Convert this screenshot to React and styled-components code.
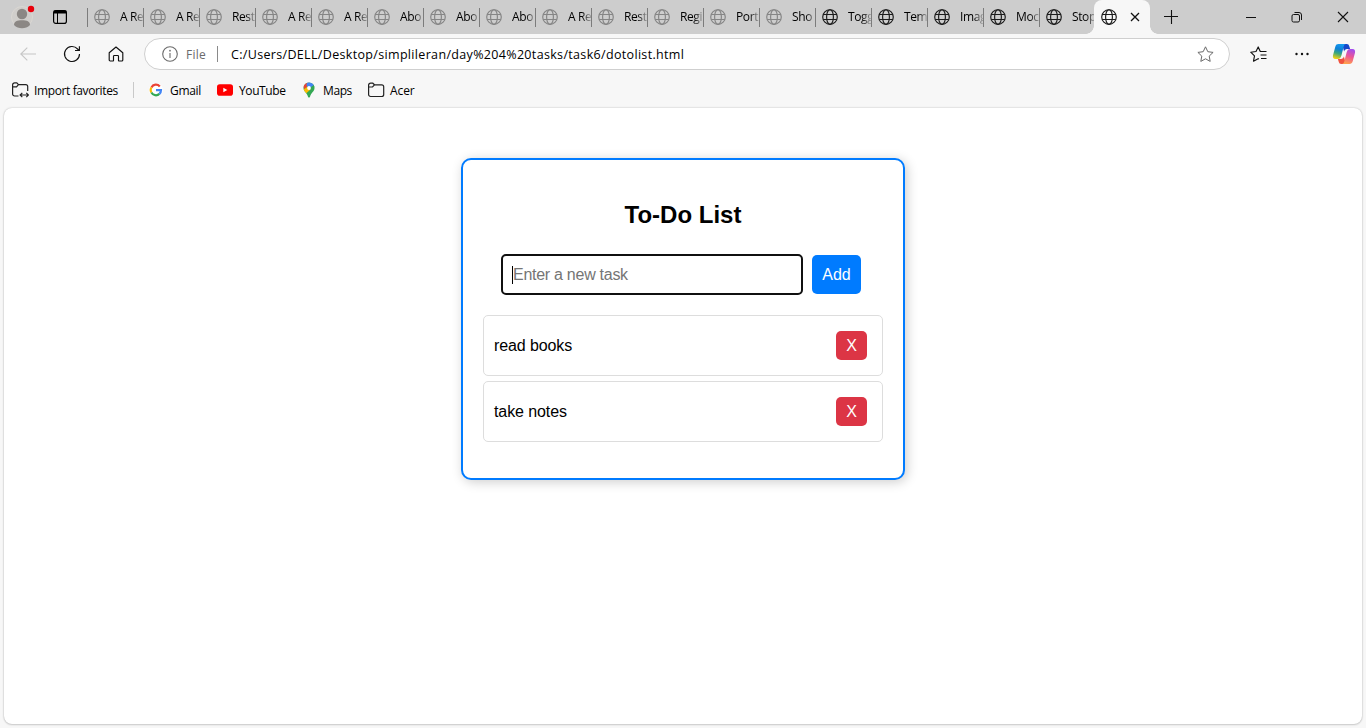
import React from "react";
import styled, { createGlobalStyle } from "styled-components";

const Global = createGlobalStyle`
  * { box-sizing: border-box; }
  body { margin: 0; background: #f7f7f7; font-family: "Open Sans", "Noto Sans", sans-serif; overflow: hidden; }
  svg { display: block; flex: none; }
`;
const Browser = styled.div`
  width: 1366px; height: 728px; background: #f7f7f7;
  display: flex; flex-direction: column; overflow: hidden;
`;
const TabStrip = styled.div`
  height: 34px; background: #cdcdcd; display: flex; flex: none;
`;
const Profile = styled.div`
  width: 44px; padding: 5px 0 0 10px;
`;
const TabActions = styled.div`
  width: 43px; padding: 9px 0 0 8px;
`;
const Tab = styled.div`
  width: 56px; display: flex; align-items: center; padding-left: 7px; position: relative;
  color: ${(p) => (p.$loaded ? "#1b1b1b" : "#858585")};
  &::before { content: ""; position: absolute; left: 0; top: 8px; width: 1px; height: 19px; background: #7c7c7c; }
`;
const TabTitle = styled.span`
  margin-left: 10px; width: 23px; overflow: hidden; white-space: nowrap;
  font-size: 12px; line-height: 18px; color: #000; letter-spacing: -0.4px;
  mask-image: linear-gradient(90deg, #000 60%, rgba(0,0,0,.2));
`;
const ActiveTab = styled.div`
  width: 56px; margin-left: -1px; background: #f7f7f7; border-radius: 8px 8px 0 0; position: relative;
  display: flex; align-items: center; padding-left: 7px; gap: 13px; color: #1b1b1b;
  &::before, &::after {
    content: ""; position: absolute; bottom: 0; width: 8px; height: 8px;
  }
  &::before { left: -8px; background: radial-gradient(circle at 0 0, transparent 7.5px, #f7f7f7 8px); }
  &::after { right: -8px; background: radial-gradient(circle at 100% 0, transparent 7.5px, #f7f7f7 8px); }
`;
const NewTab = styled.div`
  padding: 9px 0 0 14px; flex: 1;
`;
const WindowButton = styled.div`
  width: 46px; display: flex; align-items: center; justify-content: center;
`;
const Toolbar = styled.div`
  height: 40px; display: flex; align-items: center; flex: none;
`;
const ToolIcon = styled.div`
  width: ${(p) => p.$width || 44}px; margin-left: ${(p) => p.$offset || 0}px;
  display: flex; justify-content: center; flex: none;
`;
const AddressBar = styled.div`
  width: 1086px; height: 32px; margin-left: 6px; border: 1px solid #cfcfcf; border-radius: 16px;
  background: #fff; display: flex; align-items: center; padding: 0 15px 0 17px;
`;
const Scheme = styled.span`
  margin-left: 8px; width: 31px; font-size: 12px; color: #6b6b6b; white-space: nowrap; letter-spacing: 0.25px;
`;
const AddressRule = styled.span`
  width: 1px; height: 16px; background: #8a8a8a; margin-right: 13px;
`;
const Url = styled.span`
  flex: 1; font-size: 12.5px; color: #000; white-space: nowrap; letter-spacing: 0.33px;
`;
const Favorites = styled.div`
  height: 34px; display: flex; align-items: center; padding: 0 0 2px 12px; flex: none;
`;
const Favorite = styled.div`
  display: flex; align-items: center; gap: ${(p) => p.$gap}px; width: ${(p) => p.$width}px;
  font-size: 12px; color: #000; white-space: nowrap; letter-spacing: ${(p) => p.$ls || 0}px;
`;
const FavoriteRule = styled.span`
  width: 1px; height: 16px; background: #c9c9c9; margin-right: 15px;
`;
const Page = styled.main`
  width: 1358px; height: 616px; margin-left: 4px; background: #fff; border-radius: 8px;
  box-shadow: 0 0 2px rgba(0,0,0,.25), 0 1px 2px rgba(0,0,0,.12);
  font-family: "Liberation Sans", Arial, sans-serif; display: flex; justify-content: center; align-items: flex-start;
  padding-top: 50px;
`;
const Card = styled.section`
  width: 444px; height: 322px; border: 2px solid #007bff; border-radius: 10px; padding: 20px;
  box-shadow: 2px 2px 12px rgba(0,0,0,.2); background: #fff;
`;
const Title = styled.h2`
  margin: 21px 0 25px; font-size: 24px; line-height: 28px; text-align: center; color: #000;
`;
const Form = styled.div`
  display: flex; align-items: center; padding-left: 18px; height: 41px;
`;
const Field = styled.div`
  width: 302px; height: 41px; border: 2px solid #101010; border-radius: 5px; padding-left: 9px;
  display: flex; align-items: center; font-size: 16px; color: #757575; letter-spacing: -0.27px;
`;
const Caret = styled.span`
  width: 1px; height: 18px; background: #000;
`;
const AddButton = styled.button`
  width: 49px; height: 39px; margin-left: 9px; border: 0; border-radius: 5px; padding: 0;
  background: #007bff; color: #fff; font: 16px "Liberation Sans", Arial, sans-serif;
`;
const Tasks = styled.ul`
  list-style: none; margin: 20px 0 0; padding: 0; display: flex; flex-direction: column; gap: 5px;
`;
const Task = styled.li`
  height: 61px; border: 1px solid #ddd; border-radius: 5px; padding: 0 15px 0 10px;
  display: flex; align-items: center; justify-content: space-between; font-size: 16px; color: #000; letter-spacing: -0.1px;
`;
const DeleteButton = styled.button`
  width: 31px; height: 29px; border: 0; border-radius: 5px; padding: 0;
  background: #dc3545; color: #fff; font: 16px "Liberation Sans", Arial, sans-serif;
`;

const Globe = () => (
  <svg width="16" height="16" viewBox="0 0 16 16" fill="none" stroke="currentColor" strokeWidth="1.15">
    <circle cx="8" cy="8" r="7.3" />
    <ellipse cx="8" cy="8" rx="3.4" ry="7.3" />
    <path d="M1.2 5.5h13.6M1.2 10.5h13.6" />
  </svg>
);
const Folder = ({ sync }) => (
  <svg width="17" height="16" viewBox="0 0 17 16" fill="none" stroke="#222" strokeWidth="1.2">
    {sync ? (
      <>
        <path d="M6.500 14H2.600A2 2 0 0 1 .6 12V2.900A2 2 0 0 1 2.600.900H4.800l1.700 1.700h7.200a2 2 0 0 1 2 2V9M.6 4.900H4.500l2-2.200" />
        <path d="M8.300 13h8M10.300 10.800L8.100 13l2.200 2.200M14.300 10.800l2.200 2.200-2.200 2.200" />
      </>
    ) : (
      <path d="M.6 4V12.500a2 2 0 0 0 2 2h11.100a2 2 0 0 0 2-2V4.800a2 2 0 0 0-2-2H6.500L4.800 1.200H2.600A2 2 0 0 0 .6 3.200V5H4.500l2-2.200" />
    )}
  </svg>
);
const Avatar = () => (
  <svg width="26" height="24" viewBox="0 0 26 24">
    <circle cx="12" cy="12" r="10.5" fill="#d0cecb" stroke="#dad7d3" />
    <circle cx="12" cy="9" r="5.2" fill="#8b8784" />
    <path d="M4 20c0-3.500 3-4.700 8-4.700s8 1.200 8 4.700c-2 2.200-5 3.200-8 3.200S6 22.200 4 20z" fill="#8b8784" />
    <circle cx="21" cy="4" r="3.2" fill="#e8000b" />
  </svg>
);
const Workspace = () => (
  <svg width="16" height="16" viewBox="0 0 16 16" fill="none" stroke="#000" strokeWidth="1.2">
    <rect x="1.600" y="1.600" width="12.800" height="12.800" rx="2.200" />
    <path d="M1.700 3h12.600" strokeWidth="3" />
    <path d="M5.500 4v10" strokeWidth="1" />
  </svg>
);
const Back = () => (
  <svg width="16" height="14" viewBox="0 0 16 14" fill="none" stroke="#c6c6c6" strokeWidth="1.1">
    <path d="M16 7H.8M7.300.6L.8 7l6.500 6.400" />
  </svg>
);
const Reload = () => (
  <svg width="18" height="18" viewBox="0 0 18 18" fill="none" stroke="#111" strokeWidth="1.15">
    <path d="M16.500 9A7.500 7.500 0 1 1 14.600 4L16 5.500M16.400 1.200V5.500h-4.400" />
  </svg>
);
const Home = () => (
  <svg width="16" height="16" viewBox="0 0 16 16" fill="none" stroke="#111" strokeWidth="1.15" strokeLinejoin="round">
    <path d="M1.200 6.800 8 1l6.800 5.800V14a1 1 0 0 1-1 1H11.100a.6.6 0 0 1-.6-.6V10.300a.8.8 0 0 0-.8-.8H6.300a.8.8 0 0 0-.8.8v4.100a.6.6 0 0 1-.6.6H2.200a1 1 0 0 1-1-1z" />
  </svg>
);
const Info = () => (
  <svg width="16" height="16" viewBox="0 0 16 16" fill="none" stroke="#6b6b6b" strokeWidth="1.100">
    <circle cx="8" cy="8" r="7.300" />
    <path d="M8 7v5" strokeWidth="1.100" />
    <circle cx="8" cy="4.700" r=".85" fill="#6b6b6b" stroke="none" />
  </svg>
);
const Star = () => (
  <svg width="17" height="16" viewBox="0 0 17 16" fill="none" stroke="#6a6a6a" strokeWidth="1" strokeLinejoin="round">
    <path d="M8.500.8l2.300 4.900 5.300.7-3.900 3.700 1 5.300-4.700-2.600-4.700 2.600 1-5.300L.9 6.400l5.300-.7z" />
  </svg>
);
const Collections = () => (
  <svg width="17" height="16" viewBox="0 0 17 16" fill="none" stroke="#111" strokeWidth="1.150" strokeLinejoin="round">
    <path d="M12 5.500H10.300L8.200.9 6 5.500.7 6.200l3.800 3.700-1 5.300 4.600-2.500.8.400" />
    <path d="M11 5.500h5.500M10.500 9h6M11 12.500h5.500" />
  </svg>
);
const More = () => (
  <svg width="14" height="4" viewBox="0 0 14 4" fill="#111">
    <circle cx="1.500" cy="2" r="1.200" /><circle cx="7" cy="2" r="1.200" /><circle cx="12.500" cy="2" r="1.200" />
  </svg>
);
const Copilot = () => (
  <svg width="24" height="22" viewBox="0 0 24 22">
    <defs>
      <linearGradient id="cool" x1=".6" y1="0" x2=".35" y2="1">
        <stop offset="0" stopColor="#159bf0" /><stop offset=".35" stopColor="#0c80d8" />
        <stop offset=".65" stopColor="#3ca77a" /><stop offset="1" stopColor="#f3d012" />
      </linearGradient>
      <linearGradient id="warm" x1=".7" y1="0" x2=".4" y2="1">
        <stop offset="0" stopColor="#a24df0" /><stop offset=".5" stopColor="#ee5792" />
        <stop offset="1" stopColor="#ffa24b" />
      </linearGradient>
    </defs>
    <path d="M10 1h4.800c1.500 0 2 .8 2.400 2l.9 3h-3c-1.700 0-2.500.9-3 2.500z" fill="#1647c9" />
    <path d="M14 21H9.200c-1.500 0-2-.8-2.400-2l-.9-3h3c1.700 0 2.500-.9 3-2.500z" fill="#f0523f" />
    <path d="M6.500 1H14c-1.200 0-1.800.9-2.200 2.200L9.400 12.500c-.7 2.500-1.600 3.500-3.600 3.500H3.500C1.300 16 .6 14.500 1 12.300L3.300 3.700C3.900 1.700 4.800 1 6.500 1z" fill="url(#cool)" />
    <path d="M17.500 21H10c1.200 0 1.800-.9 2.200-2.200l2.400-9.300C15.300 7 16.200 6 18.200 6h2.300c2.200 0 2.900 1.500 2.500 3.700l-2.300 8.600c-.6 2-1.500 2.700-3.200 2.700z" fill="url(#warm)" />
  </svg>
);
const Google = () => (
  <svg width="14" height="14" viewBox="0 0 14 14">
    <circle cx="7" cy="7" r="7" fill="#fff" />
    <g fill="none" strokeWidth="2.200">
      <path d="M2.400 4.500A5.100 5.100 0 0 1 10.800 3.400" stroke="#ea4335" />
      <path d="M2.400 4.500a5.100 5.100 0 0 0 0 5" stroke="#fbbc05" />
      <path d="M2.400 9.500a5.100 5.100 0 0 0 8 1.400" stroke="#34a853" />
      <path d="M10.400 10.900A5.100 5.100 0 0 0 12 7.100H7" stroke="#4285f4" />
    </g>
  </svg>
);
const YouTube = () => (
  <svg width="16" height="12" viewBox="0 0 16 12">
    <rect y=".3" width="16" height="11.400" rx="2.800" fill="#f00" />
    <path d="M6.300 3.700v4.600l4-2.300z" fill="#fff" />
  </svg>
);
const MapPin = () => (
  <svg width="12" height="16" viewBox="0 0 12 16">
    <clipPath id="pin"><path d="M6 .5A5.500 5.500 0 0 0 .5 6c0 3.500 3.300 4.600 4.500 8.700.4 1.200 1.600 1.200 2 0C8.200 10.600 11.500 9.500 11.500 6A5.500 5.500 0 0 0 6 .5z" /></clipPath>
    <g clipPath="url(#pin)">
      <path d="M0 0h12v16H0z" fill="#34a853" />
      <path d="M0 0h5L4 5 1.500 7 0 5z" fill="#ea4335" />
      <path d="M4 0h8v4L6 6 3.500 3.500z" fill="#4285f4" />
      <path d="M8 5l4-3v3L3.500 11 2 9z" fill="#34a853" />
      <path d="M0 8 4 5l3.500 2.500-4.500 4z" fill="#fbbc04" />
    </g>
    <circle cx="6" cy="6" r="1.900" fill="#fff" />
  </svg>
);
const Glyph = ({ d, size = 12, width = 1.1 }) => (
  <svg width={size} height={size} viewBox={`0 0 ${size} ${size}`} fill="none" stroke="#111" strokeWidth={width}>
    <path d={d} />
  </svg>
);

const tabs = ["A Re", "A Re", "Rest", "A Re", "A Re", "Abo", "Abo", "Abo", "A Re", "Rest", "Regi", "Port", "Sho", "Togg", "Tem", "Imag", "Moc", "Stop"];
const tasks = ["read books", "take notes"];

export default function App() {
  return (
    <Browser>
      <Global />
      <TabStrip>
        <Profile><Avatar /></Profile>
        <TabActions><Workspace /></TabActions>
        {tabs.map((t, i) => (
          <Tab key={i} $loaded={i > 12}>
            <Globe />
            <TabTitle>{t}</TabTitle>
          </Tab>
        ))}
        <ActiveTab>
          <Globe />
          <Glyph size={10} d="M1 1l8 8M9 1L1 9" width={1.3} />
        </ActiveTab>
        <NewTab><Glyph size={16} d="M0 7.500h14M7.500 1v14" /></NewTab>
        <WindowButton><Glyph size={10} d="M0 5.500h10" width={1} /></WindowButton>
        <WindowButton>
          <Glyph size={12} d="M1 5a1.500 1.500 0 0 1 1.500-1.500H7A1.500 1.500 0 0 1 8.500 5v4.500A1.500 1.500 0 0 1 7 11H2.500A1.500 1.500 0 0 1 1 9.500zM3.500 1.500H8a2.500 2.500 0 0 1 2.500 2.500v5" width={1} />
        </WindowButton>
        <WindowButton><Glyph size={12} d="M1 1l10 10M11 1L1 11" /></WindowButton>
      </TabStrip>
      <Toolbar>
        <ToolIcon $offset={6}><Back /></ToolIcon>
        <ToolIcon><Reload /></ToolIcon>
        <ToolIcon><Home /></ToolIcon>
        <AddressBar>
          <Info />
          <Scheme>File</Scheme>
          <AddressRule />
          <Url>C:/Users/DELL/Desktop/simplileran/day%204%20tasks/task6/dotolist.html</Url>
          <Star />
        </AddressBar>
        <ToolIcon $offset={6}><Collections /></ToolIcon>
        <ToolIcon><More /></ToolIcon>
        <ToolIcon $width={40}><Copilot /></ToolIcon>
      </Toolbar>
      <Favorites>
        <Favorite $gap={5} $width={121} $ls={-0.38}><Folder sync />Import favorites</Favorite>
        <FavoriteRule />
        <Favorite $gap={7} $width={68} $ls={-0.3}><Google />Gmail</Favorite>
        <Favorite $gap={6} $width={86} $ls={-0.4}><YouTube />YouTube</Favorite>
        <Favorite $gap={8} $width={65} $ls={-0.4}><MapPin />Maps</Favorite>
        <Favorite $gap={5} $width={60} $ls={-0.1}><Folder />Acer</Favorite>
      </Favorites>
      <Page>
        <Card>
          <Title>To-Do List</Title>
          <Form>
            <Field><Caret />Enter a new task</Field>
            <AddButton>Add</AddButton>
          </Form>
          <Tasks>
            {tasks.map((t) => (
              <Task key={t}>{t}<DeleteButton>X</DeleteButton></Task>
            ))}
          </Tasks>
        </Card>
      </Page>
    </Browser>
  );
}
